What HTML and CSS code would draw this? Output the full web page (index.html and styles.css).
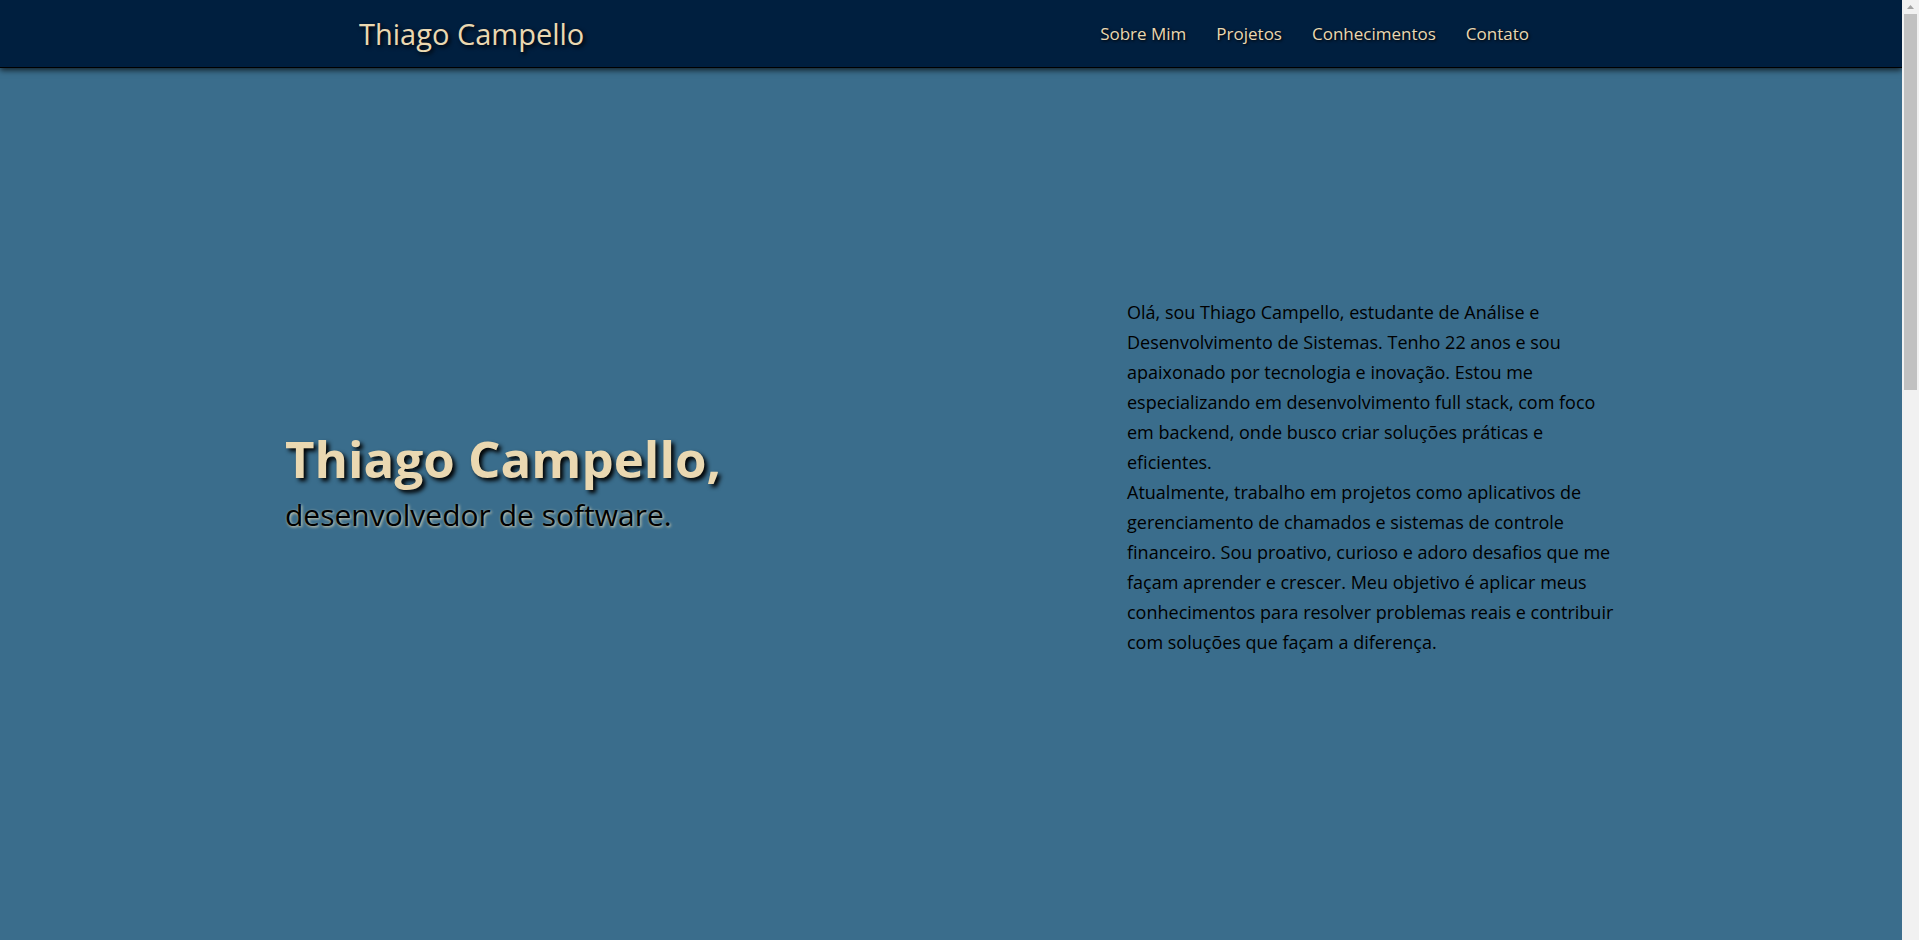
FILE: index.html
```html
<!DOCTYPE html>
<html lang="pt-BR">
<head>
<meta charset="utf-8">
<title>Thiago Campello</title>
<link rel="stylesheet" href="styles.css">
</head>
<body>
<header class="topbar">
  <a class="brand" href="#">Thiago Campello</a>
  <nav class="menu">
    <a href="#sobre">Sobre Mim</a>
    <a href="#projetos">Projetos</a>
    <a href="#conhecimentos">Conhecimentos</a>
    <a href="#contato">Contato</a>
  </nav>
</header>
<main>
  <section class="hero" id="sobre">
    <div class="hero-left">
      <h1 class="hero-title">Thiago Campello,</h1>
      <p class="hero-sub">desenvolvedor de software.</p>
    </div>
    <div class="hero-right">
      <p class="about">Olá, sou Thiago Campello, estudante de Análise e Desenvolvimento de Sistemas. Tenho 22 anos e sou apaixonado por tecnologia e inovação. Estou me especializando em desenvolvimento full stack, com foco em backend, onde busco criar soluções práticas e eficientes.</p>
      <p class="about">Atualmente, trabalho em projetos como aplicativos de gerenciamento de chamados e sistemas de controle financeiro. Sou proativo, curioso e adoro desafios que me façam aprender e crescer. Meu objetivo é aplicar meus conhecimentos para resolver problemas reais e contribuir com soluções que façam a diferença.</p>
    </div>
  </section>
</main>
<div class="scrollbar" aria-hidden="true">
  <svg class="arrow" width="17" height="14" viewBox="0 0 17 14"><path d="M5 9 L8.5 5 L12 9 Z" fill="#a3a3a3"/></svg>
  <div class="thumb"></div>
</div>
</body>
</html>
```
FILE: styles.css
```css
* { box-sizing: border-box; }
html, body { margin: 0; padding: 0; }
body {
  background: #3a6d8c;
  font-family: "Open Sans", "Noto Sans", sans-serif;
  color: #000;
  height: 940px;
  overflow: hidden;
  margin-right: 17px;
}
.topbar {
  position: relative;
  z-index: 2;
  height: 67px;
  background: #001f3f;
  display: flex;
  align-items: center;
  justify-content: space-between;
  padding: 0 373px 0 359px;
  box-shadow: 0 1px 0 #000, 0 3px 6px rgba(0,0,0,0.75);
}
.brand {
  color: #ead8b1;
  text-decoration: none;
  font-size: 29px;
  text-shadow: 2px 2px 4px #000;
}
.menu { display: flex; gap: 30px; }
.menu a {
  color: #ead8b1;
  text-decoration: none;
  font-size: 17px;
  text-shadow: 1px 1px 3px #000;
}
.hero {
  height: 820px;
  display: flex;
  align-items: center;
  justify-content: space-between;
  padding: 0 285px;
}
.hero-left { margin-top: 4px; }
.hero-title {
  margin: 0 0 7px;
  color: #ead8b1;
  font-size: 51px;
  font-weight: 700;
  line-height: 64px;
  text-shadow: 3px 3px 4px #000;
}
.hero-sub {
  margin: 0;
  font-size: 30px;
  line-height: 36px;
  color: #000;
  text-shadow: 1px 1px 3px #ead8b1;
}
.hero-right { width: 490px; }
.about {
  margin: 0;
  font-size: 18px;
  line-height: 30px;
  text-align: left;
  color: #000;
}
.scrollbar {
  position: fixed;
  top: 0;
  right: 0;
  width: 17px;
  height: 940px;
  background: #f1f1f1;
  display: flex;
  flex-direction: column;
  align-items: center;
}
.arrow { display: block; flex: none; }
.thumb {
  width: 13px;
  height: 376px;
  background: #c1c1c1;
}
```
